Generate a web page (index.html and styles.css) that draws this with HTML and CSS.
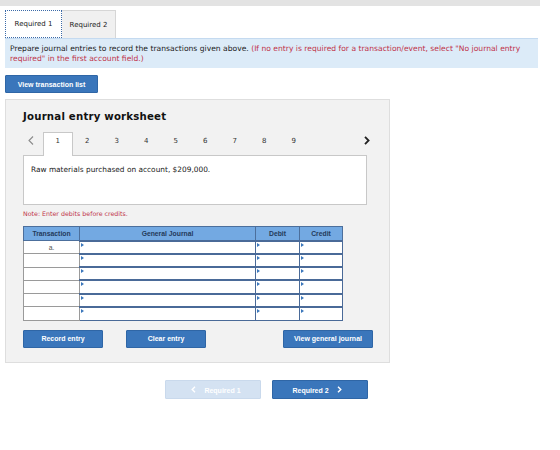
FILE: index.html
```html
<!DOCTYPE html>
<html>
<head>
<meta charset="utf-8">
<link rel="stylesheet" href="styles.css">
</head>
<body>
<div class="topbar"></div>
<div class="tabs">
  <div class="tab active">Required 1</div>
  <div class="tab">Required 2</div>
</div>
<div class="instr">Prepare journal entries to record the transactions given above. <span class="red">(If no entry is required for a transaction/event, select "No journal entry required" in the first account field.)</span></div>
<div class="btnrow"><button class="btn vtl">View transaction list</button></div>
<div class="panel">
  <h2 class="title">Journal entry worksheet</h2>
  <div class="pager">
    <span class="arrow prev"><svg width="6" height="9" viewBox="0 0 6 9"><path d="M5 0.5 L1 4.5 L5 8.5" fill="none" stroke="#8a8a8a" stroke-width="1.1"/></svg></span>
    <span class="pg cur">1</span>
    <span class="pg">2</span>
    <span class="pg">3</span>
    <span class="pg">4</span>
    <span class="pg">5</span>
    <span class="pg">6</span>
    <span class="pg">7</span>
    <span class="pg">8</span>
    <span class="pg">9</span>
    <span class="arrow next"><svg width="6" height="9" viewBox="0 0 6 9"><path d="M1 0.8 L4.6 4.5 L1 8.2" fill="none" stroke="#222" stroke-width="1.8"/></svg></span>
  </div>
  <div class="desc">Raw materials purchased on account, $209,000.</div>
  <div class="note">Note: Enter debits before credits.</div>
  <table class="jt">
    <thead>
      <tr><th class="c1">Transaction</th><th class="c2">General Journal</th><th class="c3">Debit</th><th class="c4">Credit</th></tr>
    </thead>
    <tbody>
      <tr><td class="t">a.</td><td class="in"></td><td class="in"></td><td class="in"></td></tr>
      <tr><td class="t"></td><td class="in"></td><td class="in"></td><td class="in"></td></tr>
      <tr><td class="t"></td><td class="in"></td><td class="in"></td><td class="in"></td></tr>
      <tr><td class="t"></td><td class="in"></td><td class="in"></td><td class="in"></td></tr>
      <tr><td class="t"></td><td class="in"></td><td class="in"></td><td class="in"></td></tr>
      <tr><td class="t"></td><td class="in"></td><td class="in"></td><td class="in"></td></tr>
    </tbody>
  </table>
  <div class="actions">
    <button class="btn b1">Record entry</button>
    <button class="btn b2">Clear entry</button>
    <button class="btn b3">View general journal</button>
  </div>
</div>
<div class="nav">
  <button class="btn nb dis"><svg class="chev" width="5" height="7" viewBox="0 0 5 7"><path d="M4 0.7 L1.2 3.5 L4 6.3" fill="none" stroke="#fff" stroke-width="1.4"/></svg> Required 1</button>
  <button class="btn nb">Required 2 <svg class="chev" width="5" height="7" viewBox="0 0 5 7"><path d="M1 0.7 L3.8 3.5 L1 6.3" fill="none" stroke="#fff" stroke-width="1.4"/></svg></button>
</div>
</body>
</html>
```
FILE: styles.css
```css
* { box-sizing: border-box; }
body {
  margin: 0;
  background: #fff;
  font-family: "DejaVu Sans", Verdana, sans-serif;
  color: #222;
}
.topbar {
  width: 540px;
  height: 6px;
  background: #e3e3e3;
}
.tabs {
  display: flex;
  padding-left: 5px;
  margin-top: 4px;
  height: 28px;
}
.tab {
  height: 28px;
  font-size: 7px;
  display: flex;
  align-items: center;
  justify-content: center;
  color: #222;
}
.tab.active {
  width: 57px;
  background: #fff;
  border: 1px dotted #3b6aa8;
}
.tab:not(.active) {
  width: 54px;
  background: #f0f0f0;
  border: 1px solid #d6d6d6;
  border-left: none;
  border-bottom: none;
}
.instr {
  margin: 0 0 0 5px;
  width: 533px;
  background: #dcebf8;
  border-top: 1px solid #c4daf0;
  padding: 5px 5px 4px 5px;
  font-size: 7.6px;
  line-height: 10px;
  color: #222;
}
.red { color: #c0334a; }
.btnrow { display: flex; padding: 7px 0 0 5px; }
.btn {
  font-family: "Liberation Sans", Arial, sans-serif;
  font-weight: bold;
  font-size: 7px;
  color: #fff;
  background: #3a76bb;
  border: 1px solid #2f66a6;
  border-radius: 1px;
  height: 18px;
  padding: 0;
  cursor: pointer;
}
.vtl { width: 93px; }
.panel {
  margin: 6px 0 0 5px;
  width: 385px;
  height: 264px;
  background: #f2f2f2;
  border: 1px solid #dedede;
  padding: 0 22px 0 16px;
}
.title {
  margin: 10px 0 0 0;
  font-size: 10.2px;
  font-weight: bold;
  letter-spacing: 0.2px;
  height: 14px;
  line-height: 14px;
  padding-left: 1px;
  color: #111;
}
.pager {
  display: flex;
  align-items: flex-end;
  height: 26px;
  margin-top: 5px;
  margin-left: 4px;
}
.pg, .arrow {
  font-size: 7px;
  color: #333;
  width: 29.5px;
  height: 23px;
  display: flex;
  align-items: center;
  justify-content: center;
  padding-bottom: 6px;
}
.arrow.prev {
  width: 17px;
  justify-content: flex-start;
  padding-left: 2px;
  padding-bottom: 6px;
}
.pg.cur {
  background: #fff;
  border: 1px solid #c8c8c8;
  border-bottom: none;
  height: 24px;
  margin-bottom: -1px;
  padding-bottom: 7px;
  position: relative;
  z-index: 1;
}
.arrow.next {
  margin-left: auto;
  margin-right: -5px;
  width: 10px;
  padding-bottom: 6px;
}
.desc {
  background: #fff;
  border: 1px solid #c8c8c8;
  height: 50px;
  margin-left: 1px;
  margin-right: 0;
  padding: 9px 7px;
  font-size: 7.4px;
  color: #222;
}
.note {
  margin-top: 5px;
  font-size: 6.3px;
  color: #c0334a;
  padding-left: 1px;
  height: 9px;
}
.jt {
  margin-top: 7px;
  margin-left: 1px;
  border-collapse: collapse;
  table-layout: fixed;
  width: 319px;
  font-family: "Liberation Sans", Arial, sans-serif;
}
.jt th {
  background: #73a9e2;
  border: 1px solid #4c6f9c;
  font-size: 6.8px;
  font-weight: bold;
  color: #243a5a;
  height: 14px;
  padding: 0;
}
.c1 { width: 56px; }
.c2 { width: 176px; }
.c3 { width: 44px; }
.c4 { width: 43px; }
.jt td {
  height: 13.3px;
  padding: 0;
  background: #fff;
}
.jt td.t {
  border: 1px solid #9a9a9a;
  font-size: 6.8px;
  text-align: center;
  vertical-align: middle;
  color: #555;
}
.jt td.in {
  border: 1px solid #4a6a98;
  border-top-width: 2px;
  position: relative;
}
.jt td.in::before {
  content: "";
  position: absolute;
  left: 1px;
  top: 1px;
  width: 0;
  height: 0;
  border-top: 2px solid transparent;
  border-bottom: 2px solid transparent;
  border-left: 3px solid #3a76bb;
}
.actions {
  display: flex;
  margin-top: 9px;
  margin-left: 1px;
}
.actions .btn { height: 18px; }
.b1 { width: 80px; }
.b2 { width: 80px; margin-left: 23px; }
.b3 { width: 90px; margin-left: auto; margin-right: -6px; }
.nav {
  display: flex;
  gap: 11px;
  margin: 17px 0 0 165px;
}
.nb { width: 96px; height: 19px; }
.nb.dis { background: #d4e2f2; border-color: #c9d9ec; color: #fff; }
.chev { display: inline-block; margin: 0 6px; vertical-align: -0.5px; }
```
